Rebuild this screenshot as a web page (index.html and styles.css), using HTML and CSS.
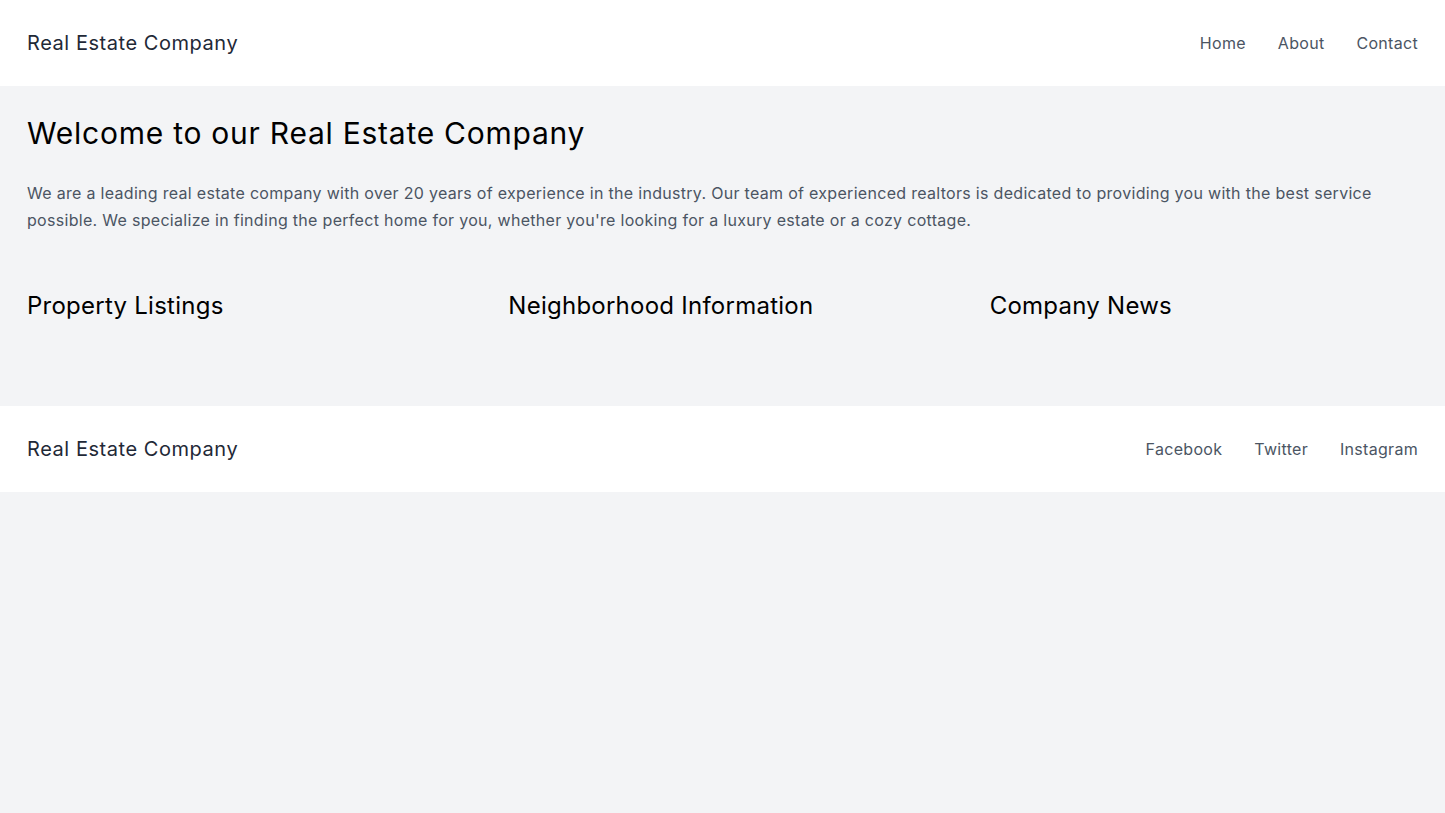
FILE: index.html
```html
<!DOCTYPE html>
<html lang="en">
<head>
<meta charset="utf-8">
<title>Real Estate Company</title>
<link rel="stylesheet" href="styles.css">
</head>
<body>
<header class="bar">
  <div class="brand">Real Estate Company</div>
  <nav class="links">
    <a href="#">Home</a>
    <a href="#">About</a>
    <a href="#">Contact</a>
  </nav>
</header>
<main class="main">
  <h1 class="title">Welcome to our Real Estate Company</h1>
  <p class="intro">We are a leading real estate company with over 20 years of experience in the industry. Our team of experienced realtors is dedicated to providing you with the best service possible. We specialize in finding the perfect home for you, whether you're looking for a luxury estate or a cozy cottage.</p>
  <section class="cols">
    <div class="col"><h2>Property Listings</h2></div>
    <div class="col"><h2>Neighborhood Information</h2></div>
    <div class="col"><h2>Company News</h2></div>
  </section>
</main>
<footer class="bar">
  <div class="brand">Real Estate Company</div>
  <nav class="links">
    <a href="#">Facebook</a>
    <a href="#">Twitter</a>
    <a href="#">Instagram</a>
  </nav>
</footer>
</body>
</html>
```
FILE: styles.css
```css
* { box-sizing: border-box; }
html, body { margin: 0; padding: 0; }
body {
  background: #f3f4f6;
  font-family: Inter, "Noto Sans", sans-serif;
  color: #000;
  min-height: 813px;
}
.bar {
  background: #fff;
  height: 86px;
  display: flex;
  align-items: center;
  justify-content: space-between;
  padding: 0 27px;
}
.brand {
  font-size: 20px;
  line-height: 28px;
  letter-spacing: 0.55px;
  color: #1f2937;
}
.links {
  display: flex;
  gap: 32px;
}
.links a {
  font-size: 16px;
  line-height: 24px;
  letter-spacing: 0.3px;
  color: #4b5563;
  text-decoration: none;
}
.main {
  padding: 29px 27px 84px;
}
.title {
  margin: 0 0 29px;
  font-size: 30px;
  line-height: 36px;
  letter-spacing: 0.75px;
  font-weight: 400;
}
.intro {
  margin: 0;
  font-size: 16px;
  line-height: 27px;
  letter-spacing: 0.3px;
  color: #4b5563;
}
.cols {
  margin-top: 56px;
  display: grid;
  grid-template-columns: repeat(3, 1fr);
  gap: 53px;
}
.col h2 {
  margin: 0;
  font-size: 24px;
  line-height: 32px;
  letter-spacing: 0.25px;
  font-weight: 400;
}
```
